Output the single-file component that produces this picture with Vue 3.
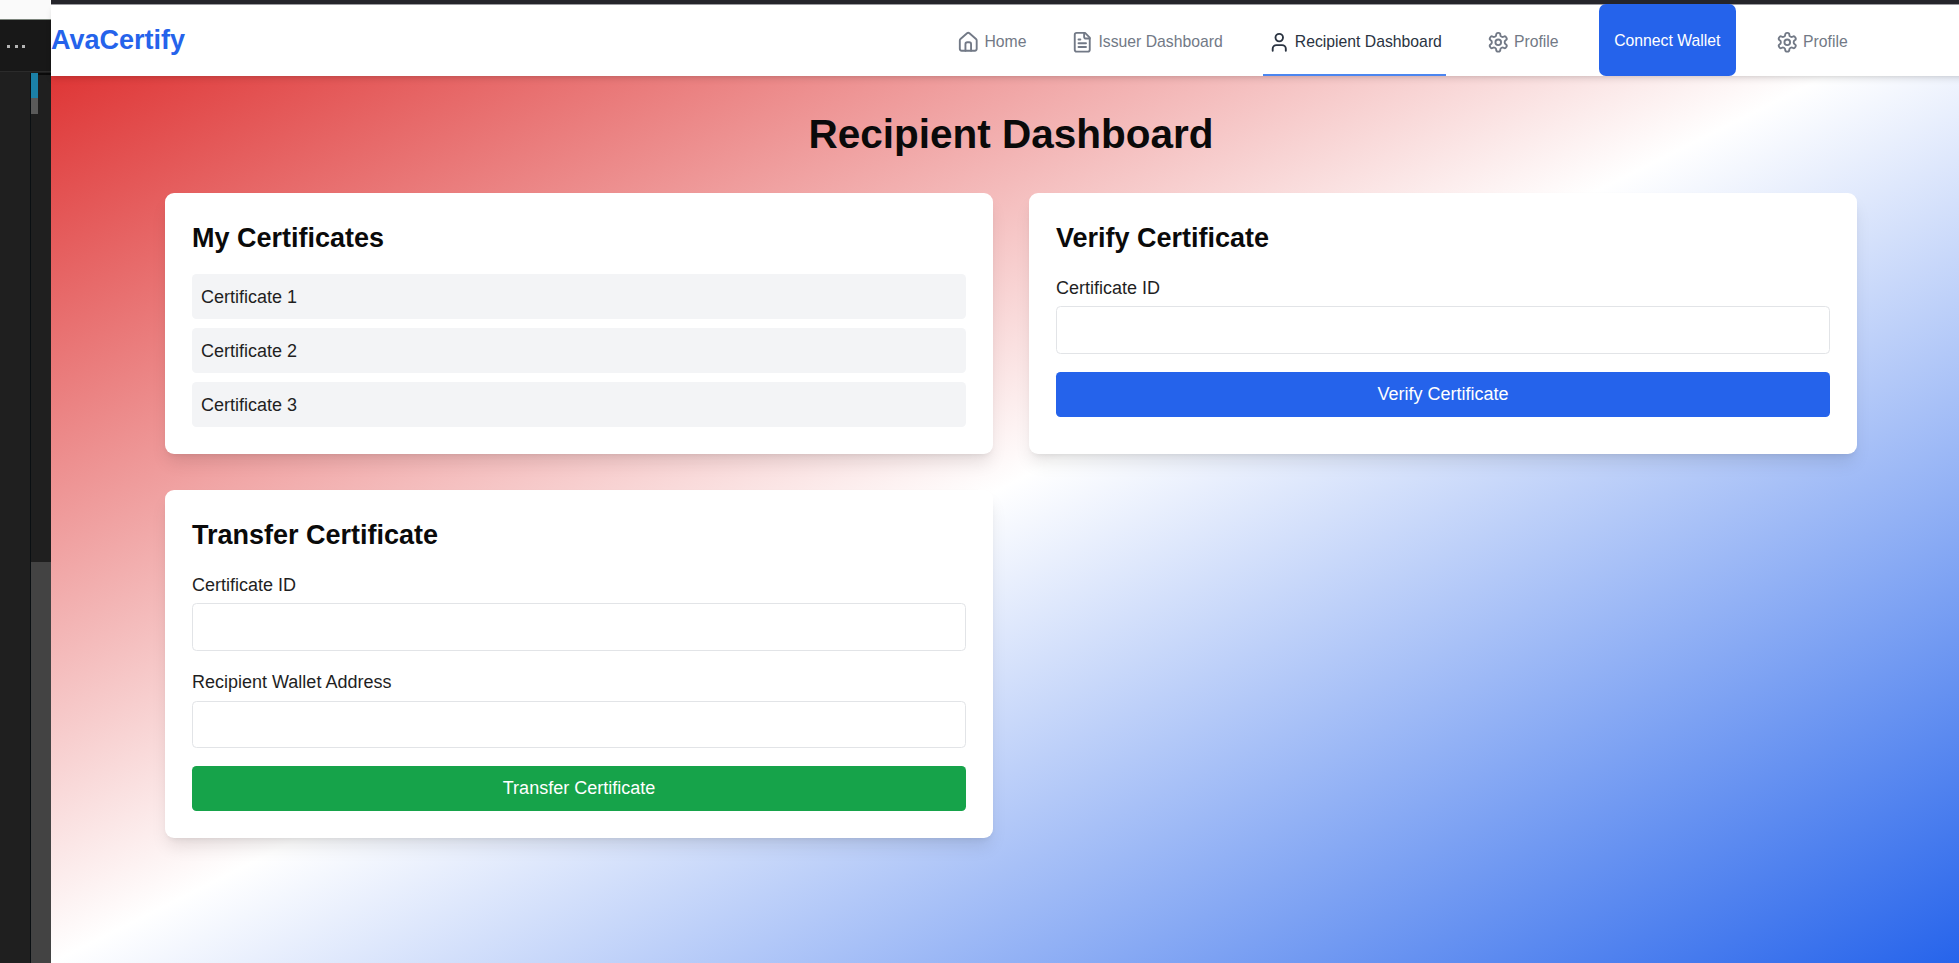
<script setup>
const icons = {
  home: [
    'M15 21v-7a2 2 0 0 0-2-2h-2a2 2 0 0 0-2 2v7',
    'M3 10a2 2 0 0 1 .709-1.528l7-5.999a2 2 0 0 1 2.582 0l7 5.999A2 2 0 0 1 21 10v9a2 2 0 0 1-2 2H5a2 2 0 0 1-2-2z',
  ],
  file: [
    'M15 2H6a2 2 0 0 0-2 2v16a2 2 0 0 0 2 2h12a2 2 0 0 0 2-2V7Z',
    'M14 2v4a2 2 0 0 0 2 2h4',
    'M10 9H8',
    'M16 13H8',
    'M16 17H8',
  ],
  user: [
    'M19 21v-2a4 4 0 0 0-4-4H9a4 4 0 0 0-4 4v2',
    'M12 3a4 4 0 1 0 0 8a4 4 0 1 0 0-8',
  ],
  gear: [
    'M12.22 2h-.44a2 2 0 0 0-2 2v.18a2 2 0 0 1-1 1.73l-.43.25a2 2 0 0 1-2 0l-.15-.08a2 2 0 0 0-2.73.73l-.22.38a2 2 0 0 0 .73 2.73l.15.1a2 2 0 0 1 1 1.72v.51a2 2 0 0 1-1 1.74l-.15.09a2 2 0 0 0-.73 2.73l.22.38a2 2 0 0 0 2.73.73l.15-.08a2 2 0 0 1 2 0l.43.25a2 2 0 0 1 1 1.73V20a2 2 0 0 0 2 2h.44a2 2 0 0 0 2-2v-.18a2 2 0 0 1 1-1.73l.43-.25a2 2 0 0 1 2 0l.15.08a2 2 0 0 0 2.73-.73l.22-.39a2 2 0 0 0-.73-2.73l-.15-.08a2 2 0 0 1-1-1.74v-.5a2 2 0 0 1 1-1.74l.15-.09a2 2 0 0 0 .73-2.73l-.22-.38a2 2 0 0 0-2.73-.73l-.15.08a2 2 0 0 1-2 0l-.43-.25a2 2 0 0 1-1-1.73V4a2 2 0 0 0-2-2z',
    'M12 9a3 3 0 1 0 0 6a3 3 0 1 0 0-6',
  ],
}
const links = [
  { label: 'Home', icon: 'home' },
  { label: 'Issuer Dashboard', icon: 'file' },
  { label: 'Recipient Dashboard', icon: 'user', active: true },
  { label: 'Profile', icon: 'gear' },
  { label: 'Connect Wallet', button: true },
  { label: 'Profile', icon: 'gear' },
]
const certificates = ['Certificate 1', 'Certificate 2', 'Certificate 3']
</script>

<template>
  <div class="screen">
    <aside class="editor">
      <div class="editor-title"></div>
      <div class="editor-tabs"><i></i><i></i><i></i></div>
      <div class="editor-body">
        <div class="gutter"></div>
        <div class="minimap">
          <div class="mark teal"></div>
          <div class="mark grey"></div>
          <div class="thumb"></div>
        </div>
      </div>
    </aside>

    <div class="browser">
      <div class="chrome"></div>
      <div class="page">
        <nav class="nav">
          <span class="logo">AvaCertify</span>
          <div class="links">
            <template v-for="(l, i) in links" :key="i">
              <button v-if="l.button" class="wallet">{{ l.label }}</button>
              <a v-else class="link" :class="{ active: l.active }">
                <svg class="icon" viewBox="0 0 24 24">
                  <path v-for="d in icons[l.icon]" :key="d" :d="d" />
                </svg>
                <span>{{ l.label }}</span>
              </a>
            </template>
          </div>
        </nav>

        <main class="main">
          <h1>Recipient Dashboard</h1>
          <div class="grid">
            <section class="card">
              <h2>My Certificates</h2>
              <ul class="list">
                <li v-for="c in certificates" :key="c">{{ c }}</li>
              </ul>
            </section>
            <section class="card">
              <h2>Verify Certificate</h2>
              <label for="verify-id">Certificate ID</label>
              <input id="verify-id" type="text" />
              <button class="action blue">Verify Certificate</button>
            </section>
            <section class="card">
              <h2>Transfer Certificate</h2>
              <label for="transfer-id">Certificate ID</label>
              <input id="transfer-id" type="text" />
              <label for="wallet">Recipient Wallet Address</label>
              <input id="wallet" type="text" />
              <button class="action green">Transfer Certificate</button>
            </section>
          </div>
        </main>
      </div>
    </div>
  </div>
</template>

<style>
body {
  margin: 0;
  overflow: hidden;
}
</style>

<style scoped>
* {
  box-sizing: border-box;
}
.screen {
  display: flex;
  width: 100vw;
  height: 963px;
  overflow: hidden;
  font-family: 'Liberation Sans', Arial, sans-serif;
  font-size: 18px;
  line-height: 27px;
  color: #1f1f1f;
}
.editor {
  flex: none;
  width: 51px;
  display: flex;
  flex-direction: column;
  background: #1f1f1f;
}
.editor-title {
  height: 20px;
  background: #fafafa;
  border-bottom: 1px solid #7c857c;
}
.editor-tabs {
  height: 52px;
  background: #181818;
  border-bottom: 1px solid #2b2b2b;
  display: flex;
  gap: 4.5px;
  padding: 25px 0 0 7px;
}
.editor-tabs i {
  width: 3px;
  height: 3px;
  background: #b4b4b4;
}
.editor-body {
  flex: 1;
  display: flex;
}
.gutter {
  width: 30px;
}
.minimap {
  width: 21px;
  margin-top: 1px;
  border-left: 1px solid #0a0f12;
  background: linear-gradient(#0b0b0b, #0b0b0b) 7px 0 / 14px 2px no-repeat;
  display: flex;
  flex-direction: column;
}
.mark {
  width: 7px;
}
.mark.teal {
  height: 25px;
  background: #1b81a8;
}
.mark.grey {
  height: 16px;
  background: #5a5a5a;
}
.thumb {
  margin-top: 448px;
  flex: 1;
  background: #434343;
}
.browser {
  flex: none;
  width: 1920px;
  display: flex;
  flex-direction: column;
}
.chrome {
  height: 4px;
  background: #25252b;
}
.page {
  flex: 1;
  background: linear-gradient(to bottom right, #dc2626, #ffffff, #2563eb);
}
.nav {
  height: 72.3px;
  background: #fff;
  border-top: 1px solid #9b9ba0;
  box-shadow: 0 4.5px 6.75px -1px rgba(0, 0, 0, 0.1), 0 2.25px 4.5px -2px rgba(0, 0, 0, 0.1);
  display: flex;
  justify-content: space-between;
  align-items: stretch;
  padding-right: 118.8px;
}
.logo {
  align-self: center;
  margin-bottom: 2px;
  font-size: 27px;
  line-height: 36px;
  font-weight: 700;
  color: #2563eb;
}
.links {
  display: flex;
  gap: 36px;
  margin-top: -1px;
  font-size: 15.75px;
  line-height: 22.5px;
}
.link {
  display: flex;
  align-items: center;
  gap: 4.5px;
  padding: 7px 4.5px 0;
  border-bottom: 2px solid transparent;
  color: #727986;
}
.link.active {
  color: #2a3341;
  border-color: #4c86f0;
}
.icon {
  width: 22.5px;
  height: 22.5px;
  fill: none;
  stroke: currentColor;
  stroke-width: 2;
  stroke-linecap: round;
  stroke-linejoin: round;
}
button {
  border: 0;
  padding: 0;
  font: inherit;
  color: #fff;
}
.wallet {
  width: 136.5px;
  padding-top: 2px;
  background: #2563eb;
  border-radius: 7px;
}
.main {
  width: 1692px;
  margin: 0 auto;
  padding-top: 36px;
}
h1 {
  margin: 0 0 36px;
  font-size: 40.5px;
  line-height: 45px;
  text-align: center;
  color: #0a0a0a;
}
.grid {
  display: grid;
  grid-template-columns: 1fr 1fr;
  gap: 36px;
}
.card {
  background: #fff;
  border-radius: 9px;
  padding: 27px;
  box-shadow: 0 11.25px 16.9px -3.4px rgba(0, 0, 0, 0.1), 0 4.5px 6.75px -4.5px rgba(0, 0, 0, 0.1);
}
h2 {
  margin: 0 0 18px;
  font-size: 27px;
  line-height: 36px;
  color: #0a0a0a;
}
.list {
  list-style: none;
  margin: 0;
  padding: 0;
  display: grid;
  gap: 9px;
}
.list li {
  height: 45px;
  padding: 9.5px 9px 8.5px;
  background: #f3f4f6;
  border-radius: 4.5px;
}
label {
  display: block;
  padding-top: 0.5px;
  margin-bottom: 4.5px;
}
input {
  display: block;
  width: 100%;
  height: 47.5px;
  margin: 0 0 18px;
  border: 1px solid #e2e4e7;
  border-radius: 4.5px;
  background: #fff;
}
.action {
  display: block;
  width: 100%;
  height: 45px;
  border-radius: 4.5px;
}
.blue {
  background: #2563eb;
}
.green {
  background: #16a34a;
}
</style>
